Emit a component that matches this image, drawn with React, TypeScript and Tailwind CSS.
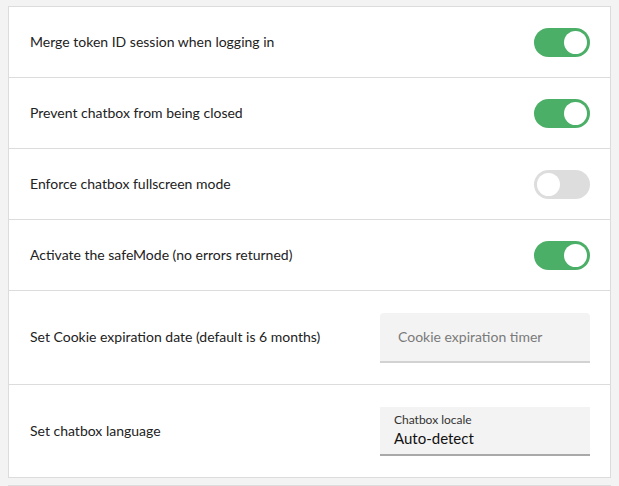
const font = { fontFamily: '"Lato", "Open Sans", sans-serif' };

function Toggle({ on }: { on: boolean }) {
  return (
    <div
      className={`w-[56px] h-[29px] rounded-full p-[3px] flex items-center ${
        on ? 'bg-[#4caf68] justify-end' : 'bg-[#dddddd] justify-start'
      }`}
    >
      <div className="w-[23px] h-[23px] rounded-full bg-white" />
    </div>
  );
}

const toggles = [
  { label: 'Merge token ID session when logging in', on: true },
  { label: 'Prevent chatbox from being closed', on: true },
  { label: 'Enforce chatbox fullscreen mode', on: false },
  { label: 'Activate the safeMode (no errors returned)', on: true },
];

export default function App() {
  return (
    <div className="w-[619px] h-[486px] bg-[#f3f3f3] pt-[6px] px-[8px] overflow-hidden" style={font}>
      <div className="bg-white border border-[#dcdcdc] text-[14px] text-[#222]">
        {toggles.map((t, i) => (
          <div
            key={i}
            className="h-[71px] flex items-center justify-between pl-[21px] pr-[20px] border-b border-[#dcdcdc]"
          >
            <span className="pb-[2px]">{t.label}</span>
            <Toggle on={t.on} />
          </div>
        ))}
        <div className="h-[94px] flex items-center justify-between pl-[21px] pr-[20px] border-b border-[#dcdcdc]">
          <span className="pb-[2px]">Set Cookie expiration date (default is 6 months)</span>
          <div className="w-[210px] h-[50px] bg-[#f3f3f3] rounded-t-[4px] border-b-2 border-[#d2d2d2] flex items-center px-[18px]">
            <span className="text-[#7a7a7a] pb-[1px]">Cookie expiration timer</span>
          </div>
        </div>
        <div className="h-[92px] flex items-center justify-between pl-[21px] pr-[20px]">
          <span className="pb-[2px]">Set chatbox language</span>
          <div className="w-[210px] h-[49px] bg-[#f3f3f3] border-b-2 border-[#a9a9a9] flex flex-col justify-center px-[14px]">
            <span className="text-[12px] text-[#333] leading-[14px]">Chatbox locale</span>
            <span className="text-[15px] text-[#111] leading-[19px] mt-[2px]">Auto-detect</span>
          </div>
        </div>
      </div>
      <div className="mt-[7px] h-[20px] bg-white border border-[#dcdcdc]" />
    </div>
  );
}
